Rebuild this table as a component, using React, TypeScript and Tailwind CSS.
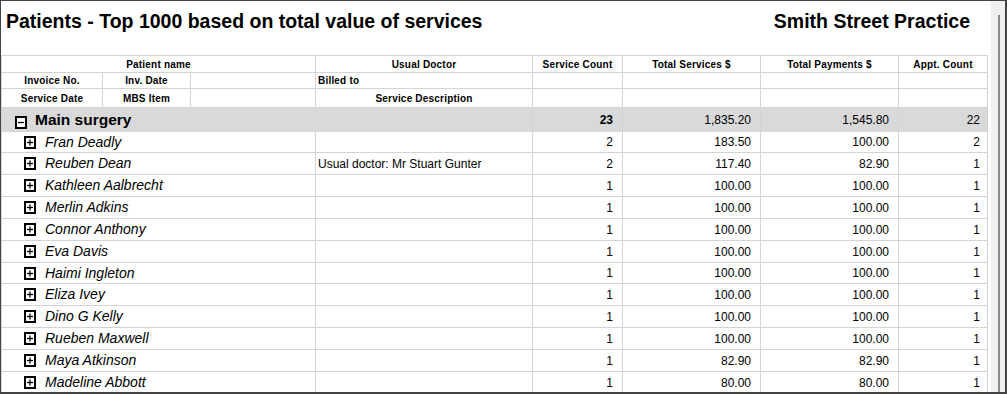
import React from 'react';

interface PatientRow {
  name: string;
  doctor: string;
  services: number;
  total: string;
  payments: string;
  appts: number;
  short?: boolean;
}

const patients: PatientRow[] = [
  { name: 'Fran Deadly', doctor: '', services: 2, total: '183.50', payments: '100.00', appts: 2, short: true },
  { name: 'Reuben Dean', doctor: 'Usual doctor: Mr Stuart Gunter', services: 2, total: '117.40', payments: '82.90', appts: 1 },
  { name: 'Kathleen Aalbrecht', doctor: '', services: 1, total: '100.00', payments: '100.00', appts: 1 },
  { name: 'Merlin Adkins', doctor: '', services: 1, total: '100.00', payments: '100.00', appts: 1 },
  { name: 'Connor Anthony', doctor: '', services: 1, total: '100.00', payments: '100.00', appts: 1 },
  { name: 'Eva Davis', doctor: '', services: 1, total: '100.00', payments: '100.00', appts: 1 },
  { name: 'Haimi Ingleton', doctor: '', services: 1, total: '100.00', payments: '100.00', appts: 1, short: true },
  { name: 'Eliza Ivey', doctor: '', services: 1, total: '100.00', payments: '100.00', appts: 1 },
  { name: 'Dino G Kelly', doctor: '', services: 1, total: '100.00', payments: '100.00', appts: 1 },
  { name: 'Rueben Maxwell', doctor: '', services: 1, total: '100.00', payments: '100.00', appts: 1 },
  { name: 'Maya Atkinson', doctor: '', services: 1, total: '82.90', payments: '82.90', appts: 1 },
  { name: 'Madeline Abbott', doctor: '', services: 1, total: '80.00', payments: '80.00', appts: 1 },
];

const cell = 'border-r border-b border-[#d4d4d4] flex items-center';
const head = `${cell} justify-center text-[10px] font-bold tracking-[0.2px]`;

function ToggleBox({ open }: { open: boolean }) {
  return (
    <svg width="12" height="13" viewBox="0 0 12 13" className="shrink-0">
      <rect x="1" y="1" width="10" height="11" fill="white" stroke="black" strokeWidth="2" />
      <line x1="3" y1="6.5" x2="9" y2="6.5" stroke="black" strokeWidth="1.3" />
      {!open && <line x1="6" y1="3.5" x2="6" y2="9.5" stroke="black" strokeWidth="1.3" />}
    </svg>
  );
}

export default function App() {
  return (
    <div
      className="w-[1007px] h-[394px] flex bg-white text-black border-l border-t border-r-2 border-b-2 border-[#444] overflow-hidden"
      style={{ fontFamily: '"Liberation Sans", Arial, sans-serif' }}
    >
      <div className="flex-1 flex flex-col overflow-hidden">
        {/* Title bar */}
        <div className="h-[54px] shrink-0 flex items-start justify-between pl-[5px] pr-[21px] pt-[11px]">
          <span className="text-[19.5px] font-bold leading-none">
            Patients - Top 1000 based on total value of services
          </span>
          <span className="text-[19.5px] font-bold leading-none">Smith Street Practice</span>
        </div>

        {/* Grid */}
        <div className="w-[987px] grid grid-cols-[101px_88px_125px_217px_90px_138px_138px_89px] border-l border-t border-[#d4d4d4]">
          <div className={`${head} col-span-3 h-[17px]`}>Patient name</div>
          <div className={`${head} h-[17px]`}>Usual Doctor</div>
          <div className={`${head} h-[17px]`}>Service Count</div>
          <div className={`${head} h-[17px]`}>Total Services $</div>
          <div className={`${head} h-[17px]`}>Total Payments $</div>
          <div className={`${head} h-[17px]`}>Appt. Count</div>

          <div className={`${head} h-[16px]`}>Invoice No.</div>
          <div className={`${head} h-[16px]`}>Inv. Date</div>
          <div className={`${head} h-[16px]`} />
          <div className={`${head} !justify-start pl-[2px] h-[16px]`}>Billed to</div>
          <div className={`${head} h-[16px]`} />
          <div className={`${head} h-[16px]`} />
          <div className={`${head} h-[16px]`} />
          <div className={`${head} h-[16px]`} />

          <div className={`${head} h-[19px]`}>Service Date</div>
          <div className={`${head} h-[19px]`}>MBS Item</div>
          <div className={`${head} h-[19px]`} />
          <div className={`${head} h-[19px]`}>Service Description</div>
          <div className={`${head} h-[19px]`} />
          <div className={`${head} h-[19px]`} />
          <div className={`${head} h-[19px]`} />
          <div className={`${head} h-[19px]`} />

          {/* Group row */}
          <div className="col-span-4 h-[24px] bg-[#d9d9d9] border-r border-b border-[#d4d4d4] flex items-center pl-[13px] gap-[8px]">
            <span className="mt-[6px]">
              <ToggleBox open />
            </span>
            <span className="text-[15.5px] font-bold">Main surgery</span>
          </div>
          <div className={`${cell} h-[24px] bg-[#d9d9d9] justify-end pr-[9px] text-[12px] font-bold`}>23</div>
          <div className={`${cell} h-[24px] bg-[#d9d9d9] justify-end pr-[9px] text-[12px]`}>1,835.20</div>
          <div className={`${cell} h-[24px] bg-[#d9d9d9] justify-end pr-[9px] text-[12px]`}>1,545.80</div>
          <div className={`${cell} h-[24px] bg-[#d9d9d9] justify-end pr-[7px] text-[12px]`}>22</div>

          {patients.map((p) => (
            <PatientLine key={p.name} row={p} />
          ))}
        </div>
      </div>

      {/* Scroll track */}
      <div className="w-[14px] shrink-0 bg-[#f0f0f0] flex pt-[14px] pl-[7px]">
        <div className="w-[2px] bg-[#8a8a8a]" />
      </div>
    </div>
  );
}

function PatientLine({ row }: { row: PatientRow }) {
  const h = row.short ? 'h-[21px]' : 'h-[22px]';
  return (
    <>
      <div className={`${cell} ${h} col-span-3 pl-[22px] gap-[9px]`}>
        <ToggleBox open={false} />
        <span className="text-[14px] italic">{row.name}</span>
      </div>
      <div className={`${cell} ${h} pl-[2px] text-[12px]`}>{row.doctor}</div>
      <div className={`${cell} ${h} justify-end pr-[9px] text-[12px]`}>{row.services}</div>
      <div className={`${cell} ${h} justify-end pr-[9px] text-[12px]`}>{row.total}</div>
      <div className={`${cell} ${h} justify-end pr-[9px] text-[12px]`}>{row.payments}</div>
      <div className={`${cell} ${h} justify-end pr-[7px] text-[12px]`}>{row.appts}</div>
    </>
  );
}
